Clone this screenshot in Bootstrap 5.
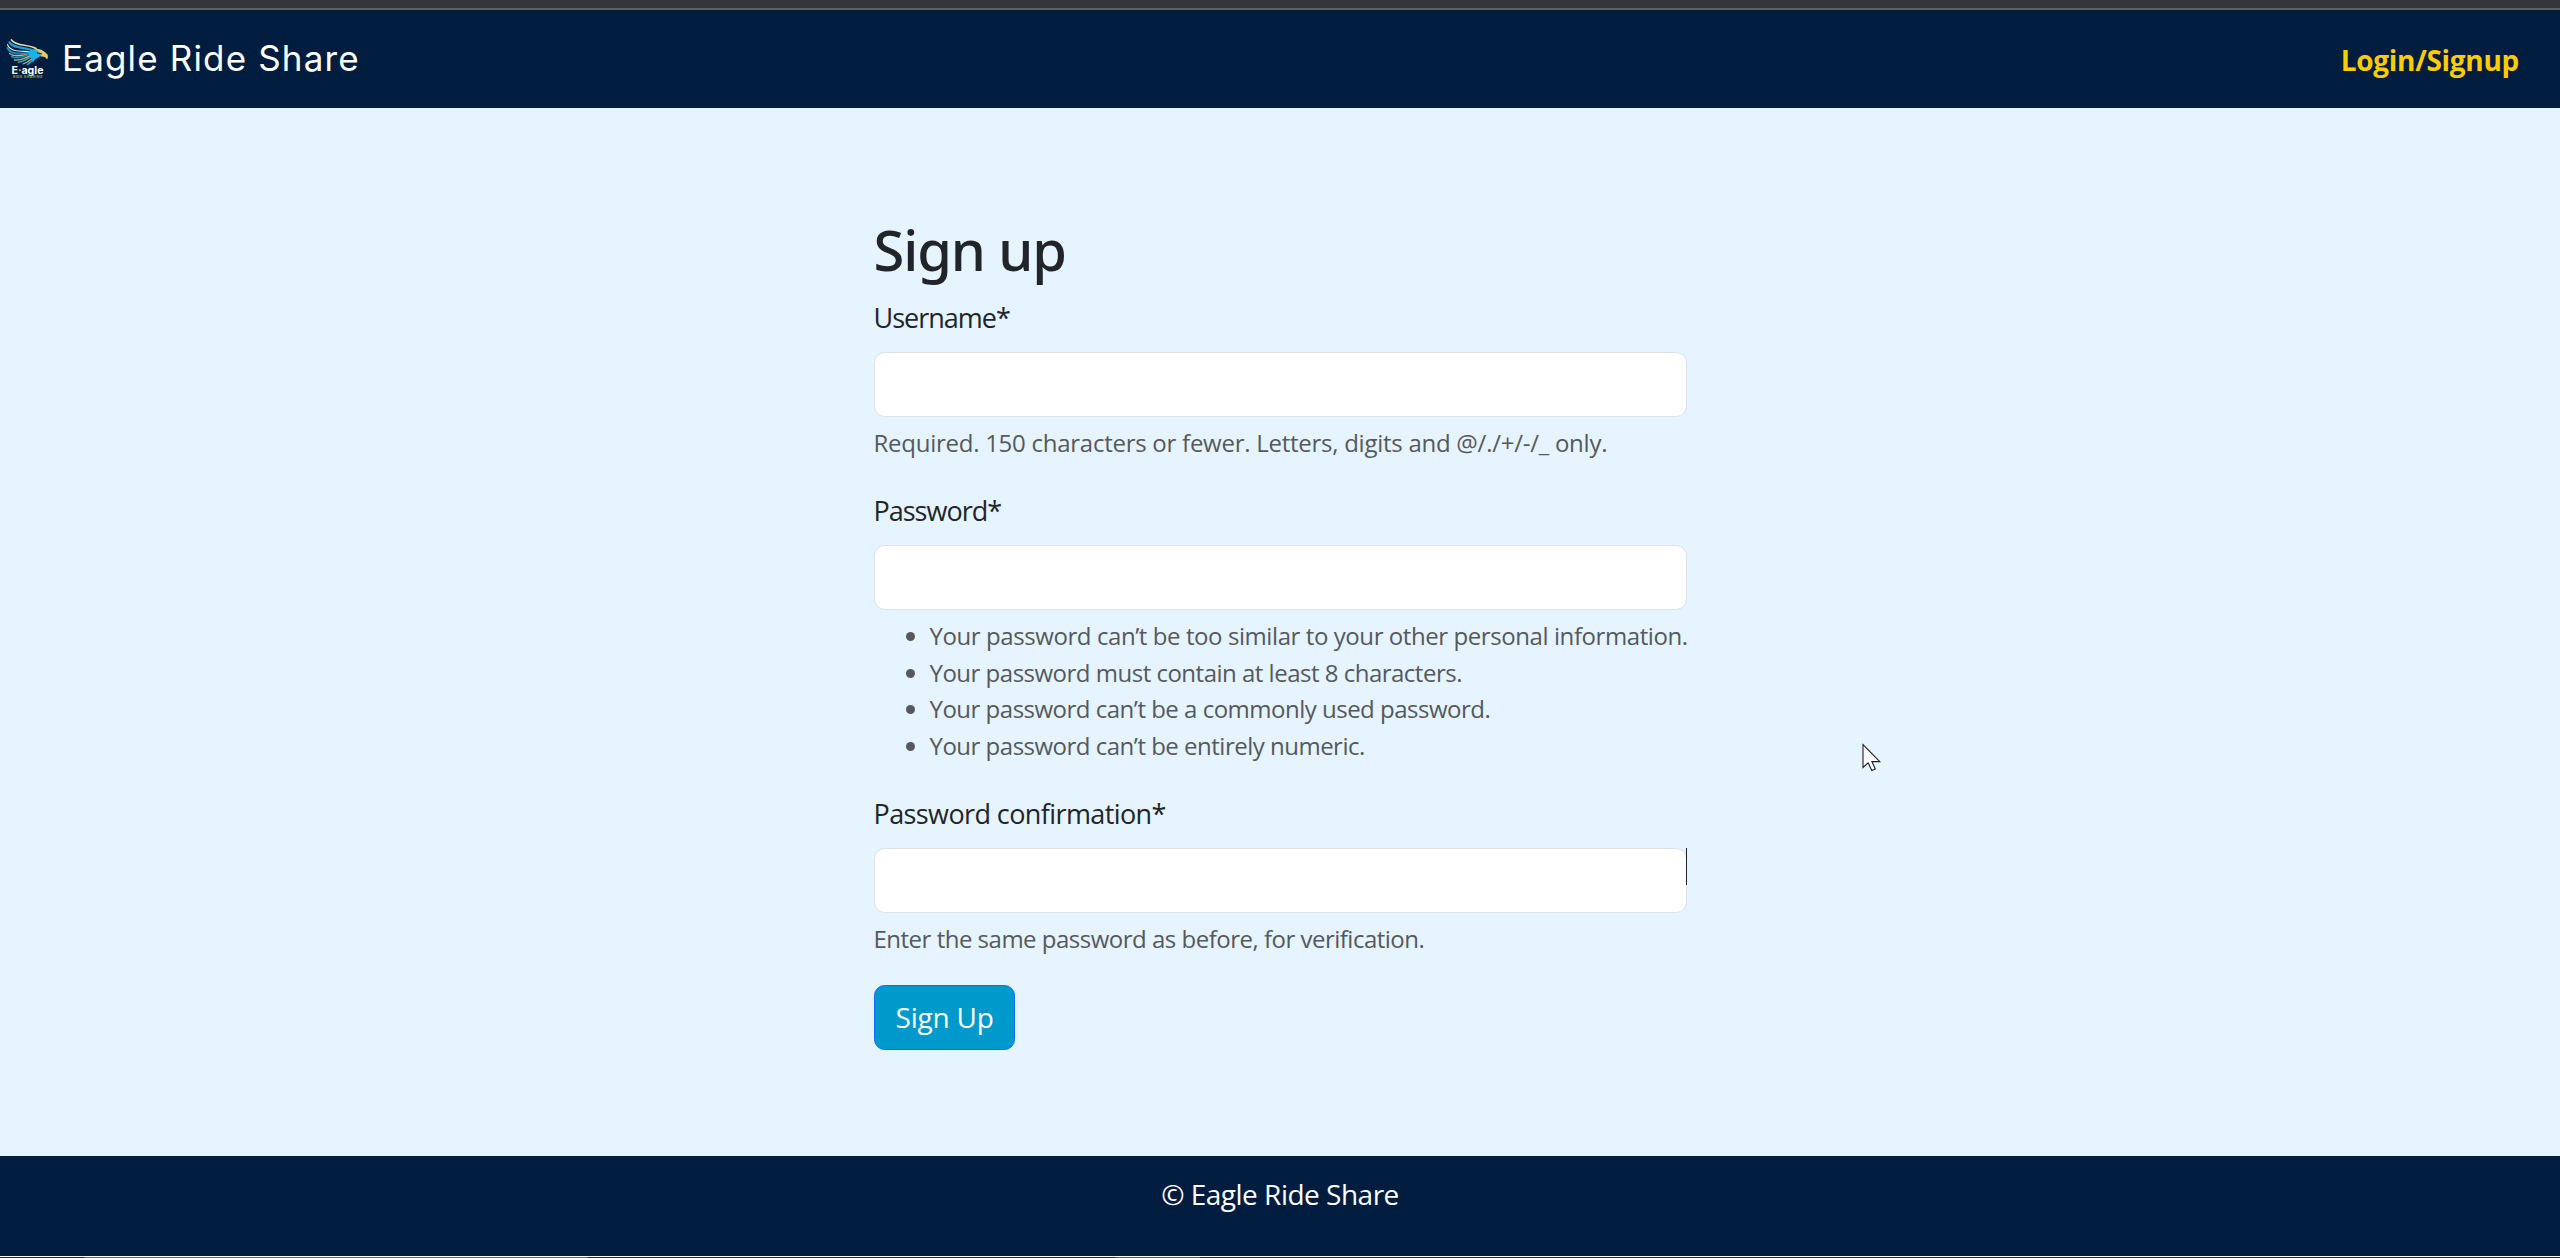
<!DOCTYPE html>
<html lang="en">
<head>
  <meta charset="UTF-8" />
  <meta name="viewport" content="width=device-width, initial-scale=1.0" />
  <title>Eagle Ride Share</title>
  <link href="https://cdn.jsdelivr.net/npm/bootstrap@5.3.0/dist/css/bootstrap.min.css" rel="stylesheet" />
  <style>
    html {
      font-size: 28px;
    }

    body {
      height: 1258px;
      overflow: hidden;
      background-color: #e6f4ff;
      font-family: "Open Sans", "Noto Sans", sans-serif;
    }

    .window-edge {
      height: 10px;
      background-color: #35363a;
      border-bottom: 2px solid #5f6063;
    }

    .site-nav {
      height: 98px;
      background-color: #001d3f;
    }

    .site-nav .navbar-brand {
      gap: 6px;
      font-family: Inter, sans-serif;
      font-size: 35px;
      letter-spacing: 1.15px;
    }

    .brand-name {
      padding-bottom: 2px;
    }

    .site-nav .nav-link {
      color: #ffcc00;
      padding: 2px 0 0;
      margin-right: 41px;
      letter-spacing: -0.3px;
    }

    main {
      padding-top: 108px;
    }

    .signup-form {
      width: 813px;
    }

    .signup-form h2 {
      margin-bottom: 13px;
      font-family: "Noto Sans", sans-serif;
      font-size: 2rem;
      letter-spacing: -1.1px;
    }

    .form-label {
      display: block;
      padding-top: 2px;
      font-size: 27px;
      line-height: 40px;
      letter-spacing: -1px;
    }

    .form-label.long-label {
      letter-spacing: -0.6px;
    }

    .form-control {
      height: 65px;
      border-color: #dee2e6;
    }

    .form-text {
      margin-top: 8px;
      margin-bottom: -1px;
      color: #55595d;
      font-size: 24px;
      line-height: 36.75px;
      letter-spacing: -0.5px;
      white-space: nowrap;
    }

    #hint_username {
      letter-spacing: -0.26px;
    }

    ul.form-text {
      padding-left: 2rem;
    }

    ul.form-text li:first-child {
      letter-spacing: -0.42px;
    }

    .btn-signup {
      --bs-btn-bg: #0099cc;
      --bs-btn-color: #fff;
      --bs-btn-border-color: #0d6efd;
      --bs-btn-hover-bg: #007aa3;
      --bs-btn-hover-color: #fff;
      width: 141px;
      height: 65px;
      letter-spacing: -0.2px;
      white-space: nowrap;
    }

    .site-footer {
      height: 100px;
      padding-top: 17px;
      background-color: #001d3f;
      letter-spacing: -0.5px;
    }

    .taskbar-edge {
      height: 2px;
      border-top: 1px solid #fff;
      background: linear-gradient(to right, #2b2226 84px, #6b6468 84px 588px, #2b2226 588px 1115px, #5f585c 1115px 1200px, #2b2226 1200px);
    }

    /* text caret left at the edge of the last field */
    .caret {
      position: absolute;
      top: 0;
      right: 0;
      width: 1px;
      height: 37px;
      background-color: #212529;
    }

    .mouse-pointer {
      position: absolute;
      left: 1862px;
      top: 743px;
    }
  </style>
</head>

<body class="d-flex flex-column">

  <div class="window-edge flex-shrink-0"></div>

  <nav class="site-nav navbar navbar-dark flex-nowrap justify-content-between p-0 flex-shrink-0">
    <a class="navbar-brand d-flex align-items-center m-0 p-0" href="#">
      <svg width="56" height="50" viewBox="0 34 56 50" aria-hidden="true">
        <g fill="none" stroke-linecap="round" stroke-linejoin="round">
          <path d="M11.5 40 C17 47 27 43.500 36 48.500" stroke="#e9d9a8" stroke-width="1.7" />
          <path d="M9.500 42.500 C14 49 25 47 33 50.500" stroke="#1b9fd8" stroke-width="2.200" />
          <path d="M7.500 44.500 C10 52 20 51 29 51.500" stroke="#dfe9ea" stroke-width="1.100" />
          <path d="M7.500 48 C11 55 20 53.500 27 53" stroke="#1789c4" stroke-width="2" />
          <path d="M9.500 53.500 C14 57.500 21 55.500 27 54.500" stroke="#d6b467" stroke-width="1.200" />
          <path d="M11.500 56.500 C17 59.500 24 56 32 53.500" stroke="#1789c4" stroke-width="1.600" />
          <path d="M14.500 60 C21 61.500 26 56.500 34 54.500" stroke="#d6b467" stroke-width="1.300" />
          <path d="M18.500 62 C25 62 28 57 35 55" stroke="#15b7e8" stroke-width="1.700" />
          <path d="M23 64 C29 62.500 31 58 37 56" stroke="#d6b467" stroke-width="1.100" />
          <path d="M27.500 64.500 C31 62 34 58.500 39 56" stroke="#15b7e8" stroke-width="1.500" />
        </g>
        <path d="M27 52.500 C33 47.500 40 48.500 43 53 L39 57 C36 57 34 60 33 63 C31.500 58 31 56 27 52.500 Z" fill="#18b4e6" />
        <path d="M33 48.500 C39 48 44 50 47.500 54.500 C48.300 56 48 58 47 59.500 C46 57 43.500 56 40.500 56.500 C41.500 54 39 50.500 33 48.500 Z" fill="#e7c667" />
        <path d="M37 52.800 L42 54" stroke="#062a4b" stroke-width="1" />
        <text x="11.500" y="73.800" font-family="Inter, sans-serif" font-size="10.500" font-weight="700" letter-spacing="0" fill="#fff" textLength="32" lengthAdjust="spacingAndGlyphs">E<tspan fill="#e7b640">·</tspan>agle</text>
        <text x="13" y="78" font-family="Inter, sans-serif" font-size="3.600" font-weight="700" letter-spacing="0" fill="#b8923f" textLength="29.500">RIDE SHARING</text>
      </svg>
      <span class="brand-name">Eagle Ride Share</span>
    </a>
    <a class="nav-link fw-bold" href="#">Login/Signup</a>
  </nav>

  <main class="flex-grow-1 d-flex justify-content-center align-items-start">
    <form class="signup-form">
      <h2>Sign up</h2>

      <div class="mb-3">
        <label for="id_username" class="form-label">Username*</label>
        <input type="text" class="form-control" id="id_username" name="username" />
        <div id="hint_username" class="form-text">Required. 150 characters or fewer. Letters, digits and @/./+/-/_ only.</div>
      </div>

      <div class="mb-3">
        <label for="id_password1" class="form-label">Password*</label>
        <input type="password" class="form-control" id="id_password1" name="password1" />
        <ul class="form-text">
          <li>Your password can’t be too similar to your other personal information.</li>
          <li>Your password must contain at least 8 characters.</li>
          <li>Your password can’t be a commonly used password.</li>
          <li>Your password can’t be entirely numeric.</li>
        </ul>
      </div>

      <div class="mb-3">
        <label for="id_password2" class="form-label long-label">Password confirmation*</label>
        <div class="position-relative">
          <input type="password" class="form-control" id="id_password2" name="password2" />
          <span class="caret"></span>
        </div>
        <div class="form-text">Enter the same password as before, for verification.</div>
      </div>

      <button type="button" class="btn btn-signup">Sign Up</button>
    </form>
  </main>

  <footer class="site-footer text-white text-center flex-shrink-0">
    <p class="m-0">© Eagle Ride Share</p>
  </footer>

  <div class="taskbar-edge flex-shrink-0"></div>

  <svg class="mouse-pointer" width="20" height="30" viewBox="0 0 20 30" aria-hidden="true">
    <path d="M1 1.500 V24.500 L6.200 19.800 L9.800 27.500 L13.300 26 L9.900 18.600 H17.800 Z" fill="#fff" stroke="#1c1c2b" stroke-width="1.100" />
  </svg>

  <script src="https://cdn.jsdelivr.net/npm/bootstrap@5.3.0/dist/js/bootstrap.bundle.min.js"></script>
</body>
</html>
